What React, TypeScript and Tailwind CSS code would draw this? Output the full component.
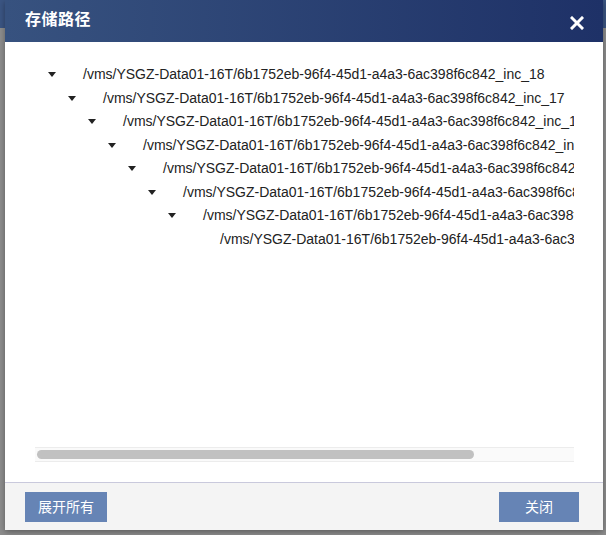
import { useState } from "react";

const base = "/vms/YSGZ-Data01-16T/6b1752eb-96f4-45d1-a4a3-6ac398f6c842_inc_";

const nodes = [18, 17, 16, 15, 14, 13, 12, 11].map((n, i) => ({
  path: base + n,
  level: i,
  leaf: i === 7,
}));

function Caret() {
  return (
    <svg width="8" height="5" viewBox="0 0 8 5" className="shrink-0">
      <path d="M0 0 L8 0 L4 5 Z" fill="#222" />
    </svg>
  );
}

export default function App() {
  const [expanded, setExpanded] = useState(true);

  return (
    <div className="w-[606px] h-[535px] overflow-hidden bg-[linear-gradient(to_bottom,#3b5583_28px,#8d8d8d_28px)] font-['Liberation_Sans',Arial,'Noto_Sans_CJK_SC',sans-serif]">
      <div className="ml-[5px] w-[598px] h-[530px] flex flex-col bg-white shadow-[0_2px_6px_rgba(0,0,0,0.35)]">
        {/* header */}
        <div className="h-[42px] shrink-0 flex items-center justify-between pl-[20px] pr-[18px] bg-[linear-gradient(to_right,#37527f,#1e3167)]">
          <h2 className="text-white text-[16px] font-bold tracking-[0.5px] mt-[-2px]">存储路径</h2>
          <button className="w-[16px] h-[16px] flex items-center justify-center mt-[3px]">
            <svg width="14" height="14" viewBox="0 0 14 14">
              <path d="M2 2 L12 12 M12 2 L2 12" stroke="#fff" strokeWidth="3" strokeLinecap="square" />
            </svg>
          </button>
        </div>

        {/* body */}
        <div className="flex-1 pt-[21px] pl-[30px] pr-[29px]">
          <div className="h-[384px] overflow-hidden">
            {nodes.map((node) => (
              <div
                key={node.path}
                className="h-[23.5px] flex items-center whitespace-nowrap text-[14px] text-[#222]"
                style={{ paddingLeft: 13 + node.level * 20 }}
              >
                {node.leaf ? (
                  <span className="ml-[32px]">{node.path}</span>
                ) : (
                  <>
                    <Caret />
                    <span className="ml-[27px]">{node.path}</span>
                  </>
                )}
              </div>
            ))}
          </div>
          <div className="h-[15px] bg-[#fafafa] border-y border-[#ececec] flex items-center px-[2px]">
            <div className="w-[437px] h-[9px] rounded-full bg-[#c1c1c1]" />
          </div>
        </div>

        {/* footer */}
        <div className="h-[48px] shrink-0 border-t border-[#c9c9dc] bg-[#f4f4f4] flex items-start justify-between pt-[9px] pl-[20px] pr-[24px]">
          <button
            onClick={() => setExpanded(!expanded)}
            className="w-[82px] h-[30px] bg-[#6684b5] text-white text-[14px]"
          >
            展开所有
          </button>
          <button className="w-[80px] h-[30px] bg-[#6684b5] text-white text-[14px]">关闭</button>
        </div>
      </div>
    </div>
  );
}
